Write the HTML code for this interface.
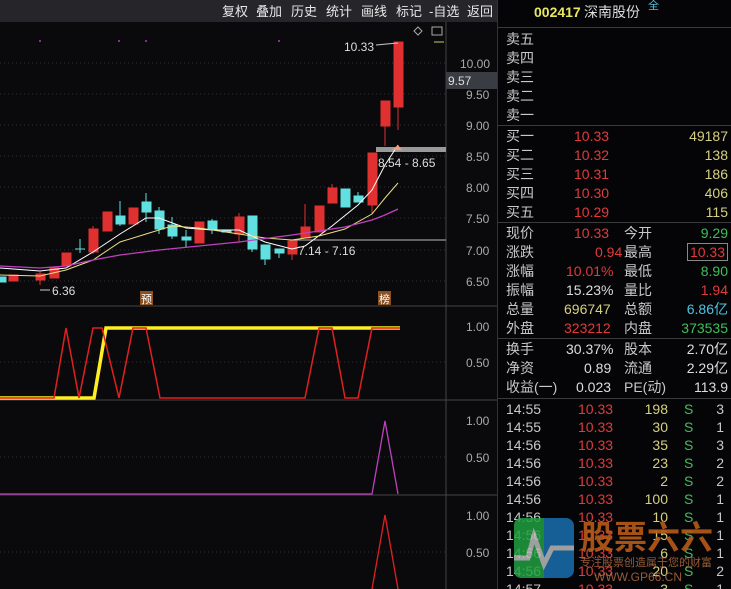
<!DOCTYPE html>
<html><head><meta charset="utf-8"><style>
body{margin:0;width:731px;height:589px;background:#0a0a0c;overflow:hidden;position:relative;font-family:"Liberation Sans","Noto Sans CJK SC",sans-serif}
.t{position:absolute;white-space:nowrap;font-size:13px;line-height:16px;color:#e8e8e8;top:4px}
.rp{position:absolute;left:497px;top:0;width:234px;height:589px;background:#050507;border-left:1px solid #333;overflow:hidden}
.row{position:absolute;left:8px;width:222px;height:19px;font-size:14px;line-height:19px;color:#c8c8c8}
.row span{position:absolute;top:0}
.r{color:#e23a3a}.y{color:#d6d080}.g{color:#3fbf5a}.c{color:#4fc4e0}.w{color:#ddd}
.hl{position:absolute;left:0;width:234px;height:1px;background:#3a3a3a}
</style></head><body>
<div style="position:absolute;left:0;top:0;width:497px;height:22px;background:#25252a"></div>
<div class="t" style="left:222px">复权</div><div class="t" style="left:256px">叠加</div><div class="t" style="left:291px">历史</div><div class="t" style="left:326px">统计</div><div class="t" style="left:361px">画线</div><div class="t" style="left:396px">标记</div><div class="t" style="left:429px">-自选</div><div class="t" style="left:467px">返回</div>
<svg style="position:absolute;left:0;top:22px" width="497" height="567" viewBox="0 22 497 567">
<g stroke="#333" stroke-dasharray="1,3" stroke-width="1">
<line x1="0" y1="63" x2="446" y2="63"/><line x1="0" y1="94" x2="446" y2="94"/><line x1="0" y1="125" x2="446" y2="125"/><line x1="0" y1="156" x2="446" y2="156"/><line x1="0" y1="187" x2="446" y2="187"/><line x1="0" y1="218" x2="446" y2="218"/><line x1="0" y1="250" x2="446" y2="250"/><line x1="0" y1="281" x2="446" y2="281"/>
<line x1="0" y1="362" x2="446" y2="362"/><line x1="0" y1="457" x2="446" y2="457"/><line x1="0" y1="552" x2="446" y2="552"/>
</g>
<g stroke="#444"><line x1="446" y1="22" x2="446" y2="589"/><line x1="0" y1="306" x2="497" y2="306"/><line x1="0" y1="400" x2="497" y2="400"/><line x1="0" y1="495" x2="497" y2="495"/></g>
<g fill="#a040c0"><circle cx="40" cy="41" r="1"/><circle cx="119" cy="41" r="1"/><circle cx="146" cy="41" r="1"/><circle cx="279" cy="41" r="1"/></g>
<rect x="376" y="147" width="70" height="5" fill="#999"/>
<line x1="290" y1="240" x2="446" y2="240" stroke="#bbb"/>
<g stroke="#e03030" fill="#e03030">
<rect x="9" y="275" width="9" height="6"/><line x1="40" y1="272" x2="40" y2="285"/><rect x="36" y="274" width="9" height="6"/><rect x="50" y="268" width="9" height="10"/><rect x="62" y="253" width="9" height="13"/><line x1="93" y1="226" x2="93" y2="254"/><rect x="89" y="229" width="9" height="23"/><rect x="103" y="212" width="9" height="19"/><rect x="129" y="208" width="9" height="16"/><rect x="195" y="222" width="9" height="21"/><line x1="239" y1="213" x2="239" y2="242"/><rect x="235" y="217" width="9" height="17"/><line x1="292" y1="241" x2="292" y2="260"/><rect x="288" y="241" width="9" height="13"/><line x1="305" y1="204" x2="305" y2="238"/><rect x="301" y="227" width="9" height="11"/><rect x="315" y="206" width="9" height="26"/><line x1="332" y1="184" x2="332" y2="203"/><rect x="328" y="188" width="9" height="15"/><line x1="372" y1="153" x2="372" y2="214"/><rect x="368" y="153" width="9" height="52"/><line x1="385" y1="101" x2="385" y2="146"/><rect x="381" y="101" width="9" height="25"/><line x1="398" y1="42" x2="398" y2="130"/><rect x="394" y="42" width="9" height="65"/>
</g>
<g stroke="#60e0e0" fill="#60e0e0">
<rect x="-2" y="277" width="8" height="5"/><line x1="80" y1="239" x2="80" y2="253"/><line x1="75" y1="249" x2="85" y2="249"/><line x1="120" y1="201" x2="120" y2="226"/><rect x="116" y="216" width="9" height="8"/><line x1="146" y1="193" x2="146" y2="222"/><rect x="142" y="202" width="9" height="10"/><line x1="159" y1="207" x2="159" y2="234"/><rect x="155" y="211" width="9" height="18"/><line x1="172" y1="217" x2="172" y2="239"/><rect x="168" y="225" width="9" height="11"/><line x1="186" y1="230" x2="186" y2="248"/><rect x="182" y="237" width="9" height="3"/><line x1="212" y1="219" x2="212" y2="234"/><rect x="208" y="221" width="9" height="8"/><rect x="222" y="230" width="9" height="2"/><line x1="252" y1="216" x2="252" y2="252"/><rect x="248" y="216" width="9" height="33"/><line x1="265" y1="245" x2="265" y2="265"/><rect x="261" y="245" width="9" height="14"/><line x1="279" y1="249" x2="279" y2="258"/><rect x="275" y="249" width="9" height="4"/><rect x="341" y="189" width="9" height="18"/><line x1="358" y1="192" x2="358" y2="202"/><rect x="354" y="196" width="9" height="6"/>
</g>
<polyline fill="none" stroke="#fff" stroke-width="1" points="0,268 40,271 66,268 93,252 120,234 146,218 159,218 186,228 212,230 239,230 265,242 292,249 305,246 332,226 358,205 372,190 385,165 398,145"/>
<polyline fill="none" stroke="#e8e080" stroke-width="1" points="0,275 40,276 66,270 93,260 120,242 146,234 172,226 199,228 239,234 265,238 292,240 319,236 345,229 372,214 385,198 398,183"/>
<polyline fill="none" stroke="#c040c0" stroke-width="1.3" points="0,266 40,268 66,266 93,260 120,255 159,250 199,246 239,242 292,235 345,227 372,220 385,215 398,209"/>
<path d="M392 150 L398 145 L402 150 Z" fill="#f0a080"/>
<line x1="376" y1="45" x2="398" y2="43" stroke="#ccc"/>
<g fill="#ddd" font-family="Liberation Sans" font-size="12">
<text x="344" y="51">10.33</text><text x="378" y="167">8.54 - 8.65</text><text x="298" y="255">7.14 - 7.16</text><text x="52" y="295">6.36</text>
</g>
<line x1="40" y1="290" x2="50" y2="290" stroke="#ccc"/>
<g fill="#aaa" font-family="Liberation Sans" font-size="12"><text x="460" y="68">10.00</text><text x="466" y="99">9.50</text><text x="466" y="130">9.00</text><text x="466" y="161">8.50</text><text x="466" y="192">8.00</text><text x="466" y="223">7.50</text><text x="466" y="255">7.00</text><text x="466" y="286">6.50</text>
<text x="466" y="331">1.00</text><text x="466" y="367">0.50</text><text x="466" y="425">1.00</text><text x="466" y="462">0.50</text><text x="466" y="520">1.00</text><text x="466" y="557">0.50</text></g>
<rect x="446" y="72" width="51" height="17" fill="#3a3c44"/><text x="448" y="85" fill="#ddd" font-family="Liberation Sans" font-size="12">9.57</text>
<rect x="140" y="291" width="13" height="14" fill="#8a5020"/><text x="141" y="303" fill="#fff" font-size="11" font-family="Noto Sans CJK SC">预</text>
<rect x="378" y="291" width="13" height="14" fill="#8a5020"/><text x="379" y="303" fill="#fff" font-size="11" font-family="Noto Sans CJK SC">榜</text>
<path d="M414 31 L418 27 L422 31 L418 35 Z" fill="none" stroke="#aaa"/><rect x="432" y="27" width="10" height="8" fill="none" stroke="#aaa"/><line x1="434" y1="42" x2="444" y2="42" stroke="#cc6"/>
<polyline fill="none" stroke="#ffee22" stroke-width="3.5" points="0,398 94,398 106,328 400,328"/>
<polyline fill="none" stroke="#e02020" stroke-width="1.5" points="0,398 54,398 66,328 79,398 93,328 102,328 119,398 133,328 146,328 160,398 305,398 319,328 332,328 345,398 358,398 372,328 400,328"/>
<polyline fill="none" stroke="#c040c0" stroke-width="1.3" points="0,494 372,494 385,421 398,494"/>
<polyline fill="none" stroke="#e02020" stroke-width="1.3" points="372,589 385,515 398,589"/>
</svg>
<div class="rp">
<div class="row" style="top:3px;left:36px;font-size:14px"><span style="color:#e8e860;font-weight:bold">002417</span><span style="left:50px;color:#ddd">深南股份</span><span style="left:114px;top:-6px;font-size:11px;color:#4fc4e0">全</span></div>
<div class="hl" style="top:27px"></div>
<div class="row" style="top:30px">卖五</div><div class="row" style="top:49px">卖四</div><div class="row" style="top:68px">卖三</div><div class="row" style="top:87px">卖二</div><div class="row" style="top:106px">卖一</div>
<div class="hl" style="top:125px"></div>
<div class="row" style="top:127px">买一<span class="r" style="left:68px">10.33</span><span class="y" style="right:0">49187</span></div>
<div class="row" style="top:146px">买二<span class="r" style="left:68px">10.32</span><span class="y" style="right:0">138</span></div>
<div class="row" style="top:165px">买三<span class="r" style="left:68px">10.31</span><span class="y" style="right:0">186</span></div>
<div class="row" style="top:184px">买四<span class="r" style="left:68px">10.30</span><span class="y" style="right:0">406</span></div>
<div class="row" style="top:203px">买五<span class="r" style="left:68px">10.29</span><span class="y" style="right:0">115</span></div>
<div class="hl" style="top:222px"></div>
<div class="row" style="top:224px">现价<span class="r" style="left:68px">10.33</span><span style="left:118px">今开</span><span class="g" style="right:0">9.29</span></div>
<div class="row" style="top:243px">涨跌<span class="r" style="left:89px">0.94</span><span style="left:118px">最高</span><span class="r" style="right:0;border:1px solid #888;line-height:16px;padding:0 2px">10.33</span></div>
<div class="row" style="top:262px">涨幅<span class="r" style="left:60px">10.01%</span><span style="left:118px">最低</span><span class="g" style="right:0">8.90</span></div>
<div class="row" style="top:281px">振幅<span class="w" style="left:60px">15.23%</span><span style="left:118px">量比</span><span class="r" style="right:0">1.94</span></div>
<div class="row" style="top:300px">总量<span class="y" style="left:58px">696747</span><span style="left:118px">总额</span><span class="c" style="right:0">6.86<span style="position:static;color:#4fc4e0">亿</span></span></div>
<div class="row" style="top:319px">外盘<span class="r" style="left:58px">323212</span><span style="left:118px">内盘</span><span class="g" style="right:0">373535</span></div>
<div class="hl" style="top:338px"></div>
<div class="row" style="top:340px">换手<span class="w" style="left:60px">30.37%</span><span style="left:118px">股本</span><span class="w" style="right:0">2.70亿</span></div>
<div class="row" style="top:359px">净资<span class="w" style="left:78px">0.89</span><span style="left:118px">流通</span><span class="w" style="right:0">2.29亿</span></div>
<div class="row" style="top:378px">收益(一)<span class="w" style="left:70px">0.023</span><span style="left:118px">PE(动)</span><span class="w" style="right:0">113.9</span></div>
<div class="hl" style="top:398px"></div>
<div class="row" style="top:400px">14:55<span class="r" style="left:72px">10.33</span><span class="y" style="right:60px">198</span><span class="g" style="left:178px">S</span><span style="right:4px">3</span></div>
<div class="row" style="top:418px">14:55<span class="r" style="left:72px">10.33</span><span class="y" style="right:60px">30</span><span class="g" style="left:178px">S</span><span style="right:4px">1</span></div>
<div class="row" style="top:436px">14:56<span class="r" style="left:72px">10.33</span><span class="y" style="right:60px">35</span><span class="g" style="left:178px">S</span><span style="right:4px">3</span></div>
<div class="row" style="top:454px">14:56<span class="r" style="left:72px">10.33</span><span class="y" style="right:60px">23</span><span class="g" style="left:178px">S</span><span style="right:4px">2</span></div>
<div class="row" style="top:472px">14:56<span class="r" style="left:72px">10.33</span><span class="y" style="right:60px">2</span><span class="g" style="left:178px">S</span><span style="right:4px">2</span></div>
<div class="row" style="top:490px">14:56<span class="r" style="left:72px">10.33</span><span class="y" style="right:60px">100</span><span class="g" style="left:178px">S</span><span style="right:4px">1</span></div>
<div class="row" style="top:508px">14:56<span class="r" style="left:72px">10.33</span><span class="y" style="right:60px">10</span><span class="g" style="left:178px">S</span><span style="right:4px">1</span></div>
<div class="row" style="top:526px">14:56<span class="r" style="left:72px">10.33</span><span class="y" style="right:60px">15</span><span class="g" style="left:178px">S</span><span style="right:4px">1</span></div>
<div class="row" style="top:544px">14:56<span class="r" style="left:72px">10.33</span><span class="y" style="right:60px">6</span><span class="g" style="left:178px">S</span><span style="right:4px">1</span></div>
<div class="row" style="top:562px">14:56<span class="r" style="left:72px">10.33</span><span class="y" style="right:60px">20</span><span class="g" style="left:178px">S</span><span style="right:4px">2</span></div>
<div class="row" style="top:580px">14:57<span class="r" style="left:72px">10.33</span><span class="y" style="right:60px">3</span><span class="g" style="left:178px">S</span><span style="right:4px">1</span></div>
<svg style="position:absolute;left:16px;top:518px;opacity:0.85" width="62" height="62"><rect x="0" y="0" width="60" height="60" rx="8" fill="#1a6fb0"/><path d="M0 8 Q0 0 8 0 L30 0 L30 60 L8 60 Q0 60 0 52Z" fill="#20a040"/><polyline points="0,40 14,40 20,18 30,46 38,30 60,30" fill="none" stroke="#bbb" stroke-width="5"/></svg>
<div style="position:absolute;left:83px;top:516px;font-size:33px;line-height:38px;font-weight:bold;color:#b85a18;opacity:0.9;font-family:'Noto Sans CJK SC',sans-serif;letter-spacing:0px">股票六六</div>
<div style="position:absolute;left:82px;top:554px;font-size:11px;color:#b06a40;opacity:0.85;font-family:'Noto Sans CJK SC',sans-serif">专注股票创造属于您的财富</div>
<div style="position:absolute;left:96px;top:570px;font-size:12px;color:#b06a40;opacity:0.85">WWW.GP66.CN</div>
</div>
</body></html>
